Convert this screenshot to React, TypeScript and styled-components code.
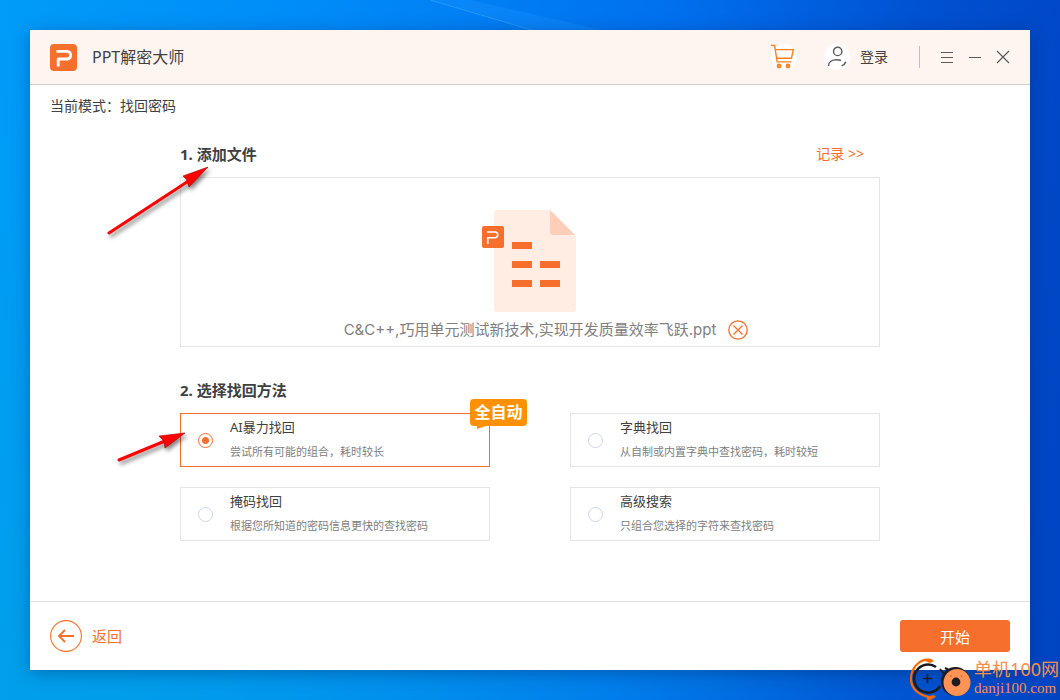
import React, { useState } from "react";
import styled, { createGlobalStyle } from "styled-components";

const ORANGE = "#f66f2c";

const GlobalStyle = createGlobalStyle`
  *, *::before, *::after { box-sizing: border-box; }
  body {
    margin: 0;
    font-family: "Noto Sans", "Noto Sans CJK SC", sans-serif;
    color: #404040;
  }
  button { font: inherit; color: inherit; background: none; border: 0; padding: 0; cursor: pointer; }
  svg { display: block; }
`;

const Desktop = styled.div`
  position: relative;
  display: flex;
  min-height: 100vh;
  padding: 30px;
  overflow: hidden;
  background:
    radial-gradient(ellipse 85% 90% at 10% 100%, rgba(0, 165, 225, 0.6), rgba(0, 165, 225, 0)),
    linear-gradient(95deg, #009cf8 0%, #008af8 30%, #0070ee 60%, #0052d2 82%, #0044c2 100%);
`;

const Beams = styled.svg`
  position: absolute;
  inset: 0;
  width: 100%;
  height: 100%;
`;

const AppWindow = styled.div`
  position: relative;
  display: flex;
  flex: 1;
  flex-direction: column;
  min-width: 0;
  background: #fff;
  box-shadow: 0 3px 16px rgba(0, 30, 80, 0.35);
`;

const TitleBar = styled.header`
  display: flex;
  align-items: center;
  height: 55px;
  padding: 0 20px;
  background: #fff5f0;
  border-bottom: 1px solid #d2cdcd;
`;

const AppName = styled.h1`
  margin: 0 auto 0 15px;
  font-size: 16px;
  line-height: 24px;
  font-weight: 400;
`;

const RoundIcon = styled.span`
  display: grid;
  place-items: center;
  width: 26px;
  height: 26px;
  border-radius: 50%;
  background: #fff;
`;

const CartButton = styled.button`
  margin-right: 27px;
`;

const LoginButton = styled.button`
  display: flex;
  align-items: center;
  gap: 10px;
  font-size: 14px;
  line-height: 24px;
`;

const Divider = styled.span`
  width: 1px;
  height: 22px;
  margin: 0 20px 0 31px;
  background: #bcbcd4;
`;

const WindowControls = styled.div`
  display: flex;
  gap: 14px;
`;

const Mode = styled.p`
  margin: 0;
  padding: 10px 20px;
  font-size: 14px;
  line-height: 22px;
`;

const Main = styled.main`
  position: relative;
  flex: 1;
  width: 100%;
  max-width: 700px;
  margin: 0 auto;
  padding: 4px 0 60px;
`;

const SectionHead = styled.div`
  display: flex;
  align-items: center;
  justify-content: space-between;
  height: 46px;
  padding-right: 16px;
`;

const SectionTitle = styled.h2`
  margin: 0;
  font-size: 15px;
  line-height: 24px;
  font-weight: 700;
`;

const RecordLink = styled.a`
  font-size: 14px;
  line-height: 24px;
  color: ${ORANGE};
  text-decoration: none;
`;

const DropBox = styled.div`
  display: flex;
  flex-direction: column;
  align-items: center;
  justify-content: flex-end;
  gap: 2px;
  height: 170px;
  margin-bottom: 20px;
  border: 1px solid #e6e6e6;
`;

const FileRow = styled.div`
  display: grid;
  grid-template-columns: 1fr auto 1fr;
  align-items: center;
  gap: 12px;
  width: 100%;
  height: 32px;
`;

const FileName = styled.span`
  grid-column: 2;
  font-family: Inter, "Noto Sans CJK SC", sans-serif;
  font-size: 15px;
  line-height: 24px;
  color: #808080;
`;

const Methods = styled.fieldset`
  display: grid;
  grid-template-columns: 1fr 1fr;
  gap: 20px 80px;
  margin: 0;
  padding: 0;
  border: 0;
`;

const MethodCard = styled.label<{ $active: boolean }>`
  position: relative;
  display: flex;
  align-items: center;
  gap: 17px;
  height: 54px;
  padding-left: 17px;
  border: 1px solid ${(p) => (p.$active ? ORANGE : "#e6e6e6")};
  cursor: pointer;
`;

const Radio = styled.input`
  appearance: none;
  width: 15px;
  height: 15px;
  margin: 0;
  border: 1px solid #cfd6ea;
  border-radius: 50%;
  background: #fff;

  &:checked {
    border-color: ${ORANGE};
    background: radial-gradient(circle, ${ORANGE} 0 3px, #fff 4px);
  }
`;

const MethodText = styled.span`
  display: flex;
  flex-direction: column;
`;

const MethodName = styled.span`
  font-size: 13px;
  line-height: 24px;
`;

const MethodNote = styled.span`
  font-size: 11px;
  line-height: 26px;
  color: #808080;
`;

const AutoTag = styled.span`
  position: absolute;
  top: -15px;
  right: -38px;
  width: 57px;
  height: 27px;
  border-radius: 4px;
  background: #ff9100;
  color: #fff;
  font-size: 16px;
  line-height: 27px;
  font-weight: 700;
  text-align: center;

  &::after {
    content: "";
    position: absolute;
    top: 100%;
    left: 7px;
    border-top: 3px solid #ff9100;
    border-right: 9px solid transparent;
  }
`;

const Footer = styled.footer`
  display: flex;
  align-items: center;
  justify-content: space-between;
  height: 69px;
  padding: 0 20px;
  border-top: 1px solid #e0e0e0;
`;

const BackButton = styled.button`
  display: flex;
  align-items: center;
  gap: 10px;
  color: ${ORANGE};
  font-size: 15px;
  line-height: 24px;
`;

const StartButton = styled.button`
  width: 110px;
  height: 32px;
  border-radius: 3px;
  background: ${ORANGE};
  color: #fff;
  font-size: 15px;
`;

const Arrow = styled.svg<{ $top: number; $left: number }>`
  position: absolute;
  top: ${(p) => p.$top}px;
  left: ${(p) => p.$left}px;
  overflow: visible;
  pointer-events: none;
  filter: drop-shadow(2px 3px 2px rgba(0, 0, 0, 0.5));
`;

const SiteMark = styled.div`
  position: absolute;
  right: 1px;
  bottom: 0;
  display: flex;
  align-items: center;
  gap: 1px;
  color: #fb8c4c;
`;

const SiteName = styled.div`
  font-size: 18px;
  line-height: 20px;
`;

const SiteHost = styled.div`
  font-family: "Liberation Serif", serif;
  font-size: 15px;
  line-height: 18px;
`;

const AppLogo = () => (
  <svg width="27" height="27" viewBox="0 0 27 27" fill="none">
    <rect width="27" height="27" rx="4" fill={ORANGE} />
    <path d="M6.5 7.4H17.6A3.9 3.9 0 0 1 17.6 15H8.2V22.5" stroke="#fff" strokeWidth="2.9" strokeLinejoin="round" />
  </svg>
);

const CartIcon = () => (
  <svg width="26" height="26" viewBox="0 0 26 26" fill="none" stroke="#ff7f1c" strokeWidth="1.4">
    <path d="M0 1.4H3.6L6.2 17.9H20.4M4.4 5.6H22.4L20.4 14.3H5.7" />
    <circle cx="8" cy="22" r="1.7" fill="#ff9a55" />
    <circle cx="17" cy="22" r="1.7" fill="#ff9a55" />
  </svg>
);

const UserIcon = () => (
  <svg width="26" height="26" viewBox="0 0 26 26" fill="none" stroke="#5c5c5c" strokeWidth="1.4">
    <circle cx="13.7" cy="7.4" r="4.2" />
    <path d="M4.5 22C4.5 17.8 8.2 15.8 12.3 15.8C14 15.8 15.7 16 17 16.5M17.6 21.8C19.8 20.8 21.3 19.5 21.8 17.7" />
  </svg>
);

const DocumentIcon = () => (
  <svg width="96" height="102" viewBox="1 0 96 102" fill="none">
    <path d="M16 0H69L95 26V99Q95 102 92 102H16Q13 102 13 99V3Q13 0 16 0Z" fill="#ffede4" />
    <path d="M69 0L94 25H72Q69 25 69 22Z" fill="#ffceb9" />
    <g fill={ORANGE}>
      <rect x="31" y="32" width="20" height="7" />
      <rect x="31" y="51" width="20" height="7" />
      <rect x="59" y="51" width="20" height="7" />
      <rect x="31" y="70" width="20" height="7" />
      <rect x="59" y="70" width="20" height="7" />
      <rect x="1" y="16" width="22" height="22" rx="2" />
    </g>
    <path d="M6 22H14.4A2.9 2.9 0 0 1 14.4 27.7H6.8V34" stroke="#fff" strokeWidth="1.6" />
  </svg>
);

const RemoveIcon = () => (
  <svg width="20" height="20" viewBox="0 0 20 20" fill="none" stroke={ORANGE} strokeWidth="1.3">
    <circle cx="10" cy="10" r="9.2" />
    <path d="M5.5 5.5L14.5 14.5M14.5 5.5L5.5 14.5" />
  </svg>
);

const BackIcon = () => (
  <svg width="32" height="32" viewBox="0 0 32 32" fill="none" stroke={ORANGE}>
    <circle cx="16" cy="16" r="15.4" strokeWidth="1.1" />
    <path d="M24 16H9M15 10L9 16L15 22" strokeWidth="1.8" />
  </svg>
);

const SiteLogo = () => (
  <svg width="64" height="44" viewBox="0 0 64 44" fill="none">
    <path d="M21 4C14 2 2 9 2 23C2 33 10 39 20 41" stroke="#ff6a00" strokeWidth="2.2" />
    <path d="M16 5Q20 0 25 5L21 7Z" fill="#ff6a00" />
    <path d="M17 42Q22 38 27 40Q24 44 19 44Z" fill="#ff6a00" />
    <path d="M27 11A14 14 0 1 0 31 30" stroke="#1d1b20" strokeWidth="2.6" />
    <path d="M14 22.5H23M18.5 18V27" stroke="#1d1b20" strokeWidth="1.6" />
    <path d="M31 13L35 18M36 12L40 14" stroke="#1d1b20" strokeWidth="2" />
    <circle cx="46.5" cy="25.5" r="14.5" fill="#1d1b20" />
    <circle cx="48" cy="26.5" r="13.5" fill="#ff9355" />
    <circle cx="47" cy="26" r="4.4" fill="#1d1b20" />
    <circle cx="42" cy="20" r="1.1" fill="#d9733c" />
    <circle cx="52.5" cy="20" r="1.1" fill="#d9733c" />
  </svg>
);

const methods = [
  { id: "ai", name: "AI暴力找回", note: "尝试所有可能的组合，耗时较长", tag: "全自动" },
  { id: "dict", name: "字典找回", note: "从自制或内置字典中查找密码，耗时较短" },
  { id: "mask", name: "掩码找回", note: "根据您所知道的密码信息更快的查找密码" },
  { id: "search", name: "高级搜索", note: "只组合您选择的字符来查找密码" },
];

export default function App() {
  const [method, setMethod] = useState("ai");

  return (
    <Desktop>
      <GlobalStyle />
      <Beams viewBox="0 0 1060 700" preserveAspectRatio="none" aria-hidden="true">
        <path d="M430 0L545 34H620L470 0Z" fill="#1e96ff" opacity="0.3" />
        <path d="M430 0L545 34" stroke="#46aaff" strokeWidth="1" opacity="0.5" />
      </Beams>

      <AppWindow>
        <TitleBar>
          <AppLogo />
          <AppName>PPT解密大师</AppName>
          <CartButton type="button" aria-label="购物车">
            <RoundIcon><CartIcon /></RoundIcon>
          </CartButton>
          <LoginButton type="button">
            <RoundIcon><UserIcon /></RoundIcon>
            登录
          </LoginButton>
          <Divider />
          <WindowControls>
            <button type="button" aria-label="菜单">
              <svg width="14" height="14" viewBox="0 0 14 14" stroke="#5a5a5a">
                <path d="M1 2.5H13M1 7.5H13M1 12.5H13" />
              </svg>
            </button>
            <button type="button" aria-label="最小化">
              <svg width="14" height="14" viewBox="0 0 14 14" stroke="#5a5a5a">
                <path d="M1 7.5H13" />
              </svg>
            </button>
            <button type="button" aria-label="关闭">
              <svg width="14" height="14" viewBox="0 0 14 14" stroke="#5a5a5a" strokeWidth="1.2">
                <path d="M1 1L13 13M13 1L1 13" />
              </svg>
            </button>
          </WindowControls>
        </TitleBar>

        <Mode>当前模式：找回密码</Mode>

        <Main>
          <SectionHead>
            <SectionTitle>1. 添加文件</SectionTitle>
            <RecordLink href="#records">记录 &gt;&gt;</RecordLink>
          </SectionHead>
          <DropBox>
            <DocumentIcon />
            <FileRow>
              <FileName>C&amp;C++,巧用单元测试新技术,实现开发质量效率飞跃.ppt</FileName>
              <button type="button" aria-label="移除文件"><RemoveIcon /></button>
            </FileRow>
          </DropBox>

          <SectionHead>
            <SectionTitle>2. 选择找回方法</SectionTitle>
          </SectionHead>
          <Methods aria-label="选择找回方法">
            {methods.map((m) => (
              <MethodCard key={m.id} $active={method === m.id}>
                <Radio
                  type="radio"
                  name="method"
                  value={m.id}
                  checked={method === m.id}
                  onChange={() => setMethod(m.id)}
                />
                <MethodText>
                  <MethodName>{m.name}</MethodName>
                  <MethodNote>{m.note}</MethodNote>
                </MethodText>
                {m.tag && <AutoTag>{m.tag}</AutoTag>}
              </MethodCard>
            ))}
          </Methods>

          <Arrow $top={40} $left={-72} width="100" height="67" viewBox="0 0 100 67" aria-hidden="true">
            <path d="M1 66L82 13" stroke="#f00" strokeWidth="3" strokeLinecap="round" />
            <path d="M100 0L75 9L79 13L81 20Z" fill="#f00" stroke="#a00" strokeWidth="0.6" />
          </Arrow>
          <Arrow $top={306} $left={-62} width="68" height="28" viewBox="0 0 68 28" aria-hidden="true">
            <path d="M1 27L47 8" stroke="#f00" strokeWidth="3" strokeLinecap="round" />
            <path d="M67 0L41 3L46 8L47 15Z" fill="#f00" stroke="#a00" strokeWidth="0.6" />
          </Arrow>
        </Main>

        <Footer>
          <BackButton type="button">
            <BackIcon />
            返回
          </BackButton>
          <StartButton type="button">开始</StartButton>
        </Footer>
      </AppWindow>

      <SiteMark>
        <SiteLogo />
        <div>
          <SiteName>单机100网</SiteName>
          <SiteHost>danji100.com</SiteHost>
        </div>
      </SiteMark>
    </Desktop>
  );
}
